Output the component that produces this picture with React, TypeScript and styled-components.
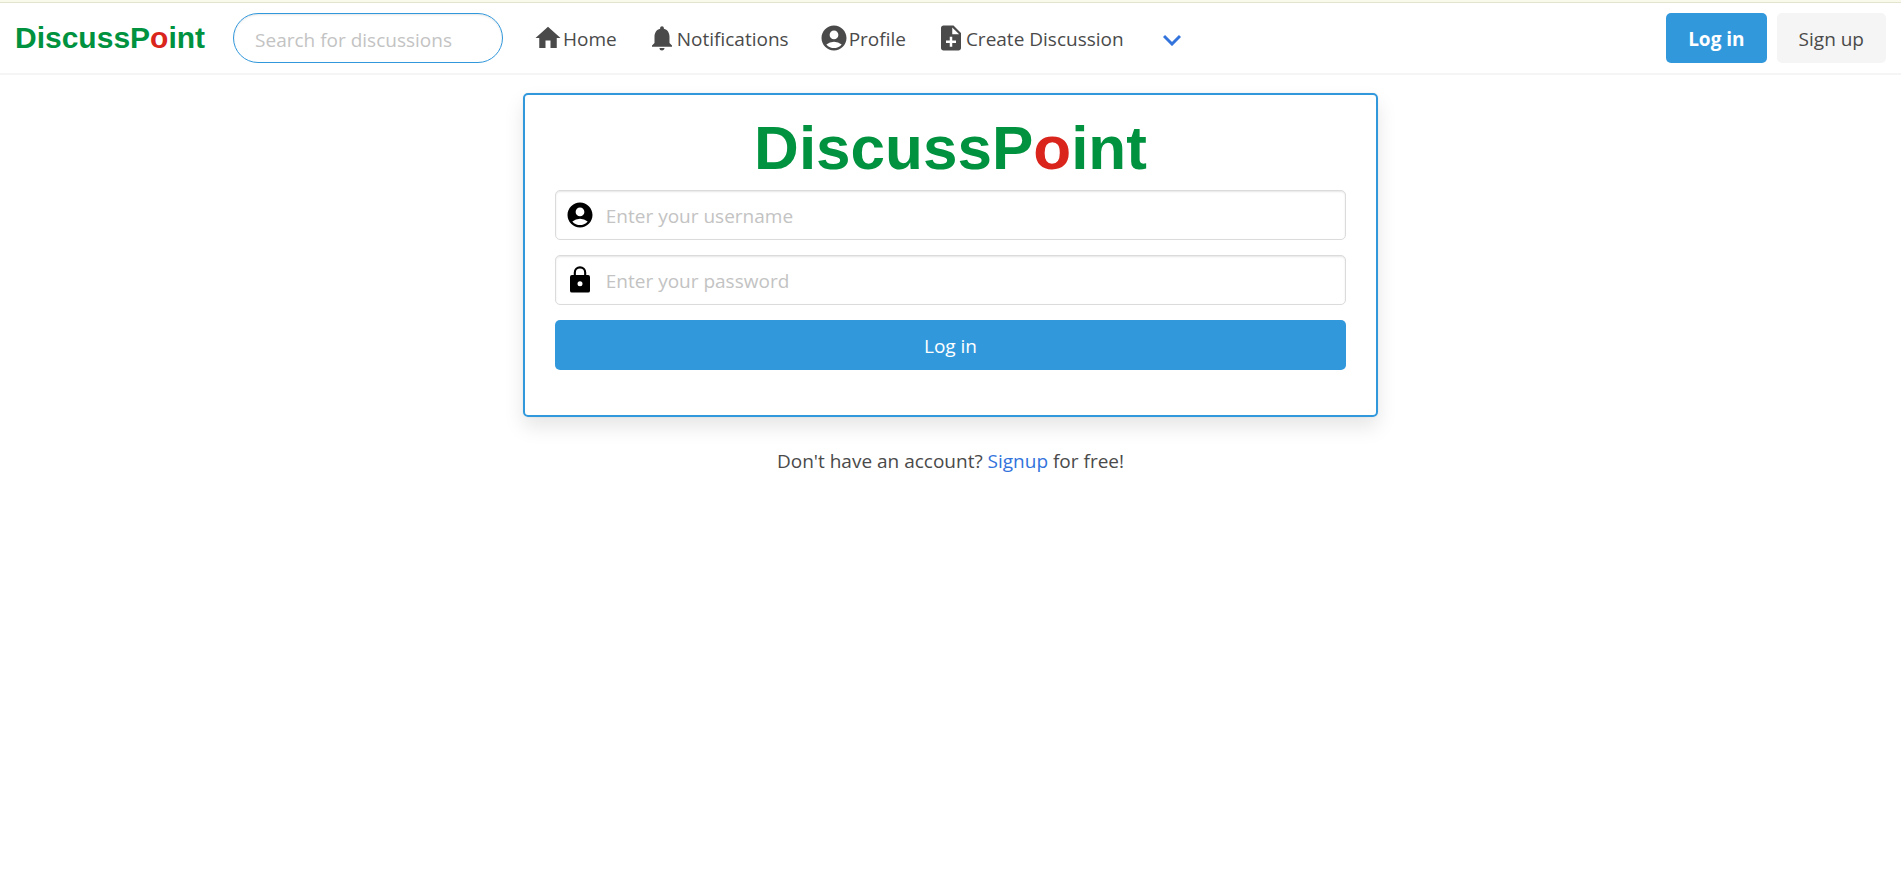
import React from "react";
import styled, { createGlobalStyle, css } from "styled-components";
import { MdHome, MdNotifications, MdAccountCircle, MdNoteAdd } from "react-icons/md";

const GlobalStyle = createGlobalStyle`
  *, *::before, *::after { box-sizing: border-box; }
  body {
    margin: 0;
    background: #ffffff;
    color: #4a4a4a;
    font-family: "Segoe UI", "Open Sans", sans-serif;
    font-size: 19px;
    line-height: 30px;
  }
  button, input { font: inherit; }
  a { color: #3273dc; text-decoration: none; }
`;

const Page = styled.div`
  border-top: 2px solid #f9f9ec;
`;

const Navbar = styled.nav`
  display: flex;
  align-items: center;
  height: 71px;
  padding: 0 15px;
  border-top: 1px solid #e3e3cf;
  box-shadow: 0 2px 0 0 #f5f5f5;
`;

const Logo = styled.a<{ $large?: boolean }>`
  color: #00923f;
  font-family: Arial, "Liberation Sans", sans-serif;
  font-weight: 700;
  font-size: ${(p) => (p.$large ? 62 : 30)}px;
  line-height: ${(p) => (p.$large ? 66 : 34)}px;
`;

const LogoDot = styled.span`
  color: #da251d;
`;

const inputBase = css`
  height: 50px;
  background: #ffffff;
  color: #363636;
  outline: none;
  box-shadow: inset 0 1px 2px rgba(10, 10, 10, 0.1);
  &::placeholder { color: #c3c3c3; opacity: 1; }
`;

const SearchInput = styled.input`
  ${inputBase}
  width: 270px;
  margin-left: 28px;
  padding: 3px 21px 0;
  border: 1px solid #3298dc;
  border-radius: 25px;
`;

const NavLinks = styled.div`
  display: flex;
  align-items: center;
  gap: 30px;
  margin-left: 30px;
`;

const NavLink = styled.a`
  display: flex;
  align-items: center;
  color: #4a4a4a;
  svg { width: 30px; height: 30px; }
  span { padding-top: 2px; }
`;

const MenuButton = styled.button`
  display: flex;
  padding: 4px 9px 0;
  border: 0;
  background: none;
  color: #3273dc;
`;

const Actions = styled.div`
  display: flex;
  gap: 10px;
  margin-left: auto;
`;

const Button = styled.button<{ $light?: boolean; $bold?: boolean; $wide?: boolean }>`
  height: 50px;
  padding: 2px 22px 0;
  border: 0;
  border-radius: 5px;
  background: ${(p) => (p.$light ? "#f5f5f5" : "#3298dc")};
  color: ${(p) => (p.$light ? "#4a4a4a" : "#ffffff")};
  font-weight: ${(p) => (p.$bold ? 700 : 400)};
  width: ${(p) => (p.$wide ? "100%" : "auto")};
`;

const Main = styled.main`
  display: flex;
  flex-direction: column;
  align-items: center;
  gap: 29px;
  padding: 20px;
`;

const Card = styled.form`
  display: flex;
  flex-direction: column;
  align-items: center;
  gap: 15px;
  width: 45vw;
  min-width: 340px;
  padding: 20px 30px 45px;
  border: 2px solid #3298dc;
  border-radius: 5px;
  box-shadow: 0 10px 20px rgba(10, 10, 10, 0.1), 0 0 0 1px rgba(10, 10, 10, 0.02);
`;

const CardLogo = styled.div`
  display: flex;
  margin-bottom: -6px;
`;

const Field = styled.label`
  display: grid;
  width: 100%;
  align-items: center;
  > * { grid-area: 1 / 1; }
  > svg { margin-left: 10px; width: 30px; height: 30px; color: #000000; z-index: 1; }
`;

const TextInput = styled.input`
  ${inputBase}
  width: 100%;
  padding: 2px 15px 0 50px;
  border: 1px solid #dbdbdb;
  border-radius: 5px;
`;

const LockIcon = () => (
  <svg viewBox="0 0 24 24" fill="currentColor" aria-hidden="true">
    <path
      fillRule="evenodd"
      d="M18.5 8H17V6A5 5 0 0 0 7 6v2H5.500A1.500 1.500 0 0 0 4 9.500v11A1.500 1.500 0 0 0 5.500 22h13a1.500 1.500 0 0 0 1.500-1.500v-11A1.500 1.500 0 0 0 18.500 8zM8.700 6a3.300 3.300 0 0 1 6.600 0v2H8.700zM12 17a2 2 0 1 1 0-4 2 2 0 0 1 0 4z"
    />
  </svg>
);

const Wordmark = ({ large }: { large?: boolean }) => (
  <Logo href="#home" $large={large}>
    DiscussP<LogoDot>o</LogoDot>int
  </Logo>
);

export default function App() {
  return (
    <Page>
      <GlobalStyle />
      <Navbar>
        <Wordmark />
        <SearchInput type="search" aria-label="Search" placeholder="Search for discussions" />
        <NavLinks>
          <NavLink href="#home"><MdHome /><span>Home</span></NavLink>
          <NavLink href="#notifications"><MdNotifications /><span>Notifications</span></NavLink>
          <NavLink href="#profile"><MdAccountCircle /><span>Profile</span></NavLink>
          <NavLink href="#create"><MdNoteAdd /><span>Create Discussion</span></NavLink>
          <MenuButton type="button" aria-label="More">
            <svg width="18" height="12" viewBox="0 0 18 12" fill="none" stroke="currentColor" strokeWidth="3">
              <path d="M1 2l8 8 8-8" />
            </svg>
          </MenuButton>
        </NavLinks>
        <Actions>
          <Button type="button" $bold>Log in</Button>
          <Button type="button" $light>Sign up</Button>
        </Actions>
      </Navbar>
      <Main>
        <Card>
          <CardLogo><Wordmark large /></CardLogo>
          <Field>
            <MdAccountCircle />
            <TextInput type="text" aria-label="Username" placeholder="Enter your username" />
          </Field>
          <Field>
            <LockIcon />
            <TextInput type="password" aria-label="Password" placeholder="Enter your password" />
          </Field>
          <Button type="submit" $wide>Log in</Button>
        </Card>
        <div>
          Don't have an account? <a href="#signup">Signup</a> for free!
        </div>
      </Main>
    </Page>
  );
}
